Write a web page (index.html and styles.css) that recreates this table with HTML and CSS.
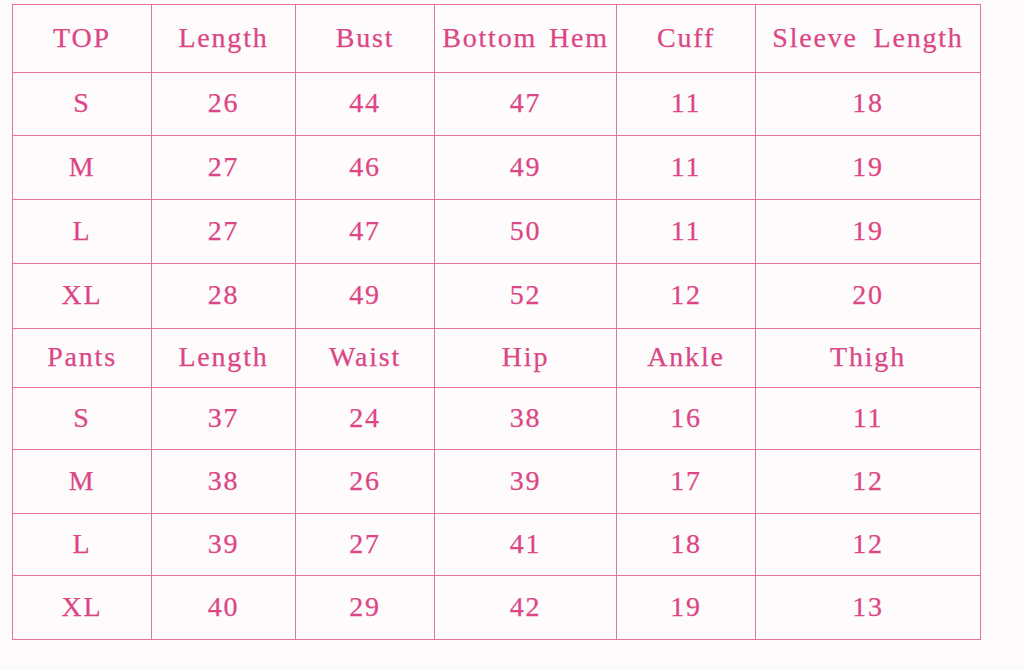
FILE: index.html
```html
<!DOCTYPE html>
<html lang="en">
<head>
<meta charset="utf-8">
<title>Size Chart</title>
<link rel="stylesheet" href="styles.css">
</head>
<body>
<div class="chart">
  <div class="cell">TOP</div><div class="cell">Length</div><div class="cell">Bust</div><div class="cell">Bottom Hem</div><div class="cell">Cuff</div><div class="cell wide">Sleeve Length</div>
  <div class="cell">S</div><div class="cell">26</div><div class="cell">44</div><div class="cell">47</div><div class="cell">11</div><div class="cell">18</div>
  <div class="cell">M</div><div class="cell">27</div><div class="cell">46</div><div class="cell">49</div><div class="cell">11</div><div class="cell">19</div>
  <div class="cell">L</div><div class="cell">27</div><div class="cell">47</div><div class="cell">50</div><div class="cell">11</div><div class="cell">19</div>
  <div class="cell">XL</div><div class="cell">28</div><div class="cell">49</div><div class="cell">52</div><div class="cell">12</div><div class="cell">20</div>
  <div class="cell">Pants</div><div class="cell">Length</div><div class="cell">Waist</div><div class="cell">Hip</div><div class="cell">Ankle</div><div class="cell">Thigh</div>
  <div class="cell">S</div><div class="cell">37</div><div class="cell">24</div><div class="cell">38</div><div class="cell">16</div><div class="cell">11</div>
  <div class="cell">M</div><div class="cell">38</div><div class="cell">26</div><div class="cell">39</div><div class="cell">17</div><div class="cell">12</div>
  <div class="cell">L</div><div class="cell">39</div><div class="cell">27</div><div class="cell">41</div><div class="cell">18</div><div class="cell">12</div>
  <div class="cell">XL</div><div class="cell">40</div><div class="cell">29</div><div class="cell">42</div><div class="cell">19</div><div class="cell">13</div>
</div>
</body>
</html>
```
FILE: styles.css
```css
html, body {
  margin: 0;
  padding: 0;
  background: #fcfafb;
}
body {
  width: 1024px;
  height: 670px;
  overflow: hidden;
  font-family: "Liberation Serif", "Times New Roman", serif;
}
.chart {
  display: grid;
  grid-template-columns: 138px 143px 138px 181px 138px 224px;
  grid-template-rows: 67px 62px 63px 63px 64px 58px 61px 63px 61px 63px;
  gap: 1px;
  width: max-content;
  margin: 4px 0 0 12px;
  border: 1px solid #e4729f;
  background: #e4729f;
}
.cell {
  display: flex;
  align-items: center;
  justify-content: center;
  padding-bottom: 2px;
  background: #fdfbfc;
  color: #dc4684;
  font-size: 28px;
  letter-spacing: 1.8px;
  word-spacing: 3px;
  white-space: nowrap;
  -webkit-text-stroke: 0.25px #dc4684;
}
.cell.wide {
  word-spacing: 7px;
}
```
